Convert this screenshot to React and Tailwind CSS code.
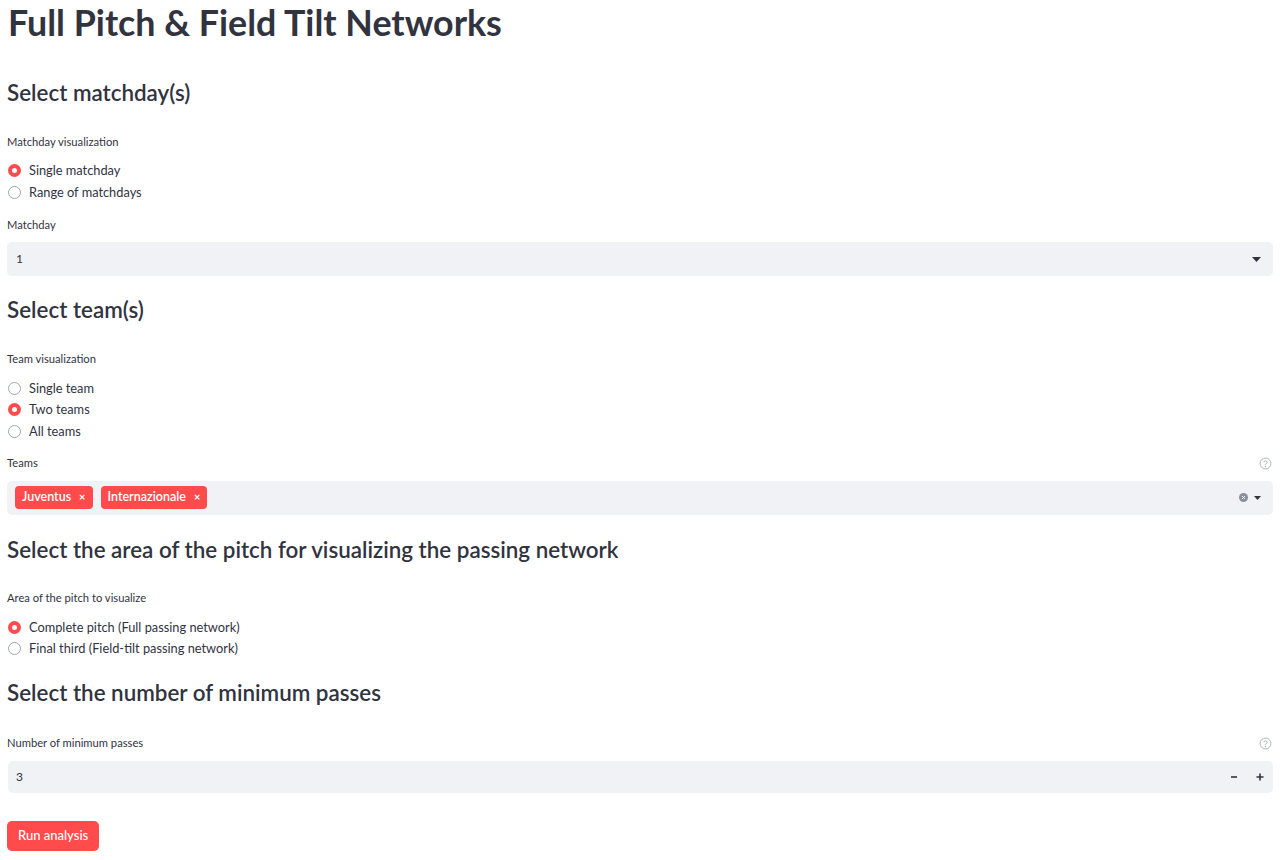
import React from "react";

const FONT = { fontFamily: "Lato, 'Open Sans', sans-serif" };

function Heading({ children, className = "" }) {
  return (
    <h3 className={`h-[30px] leading-[30px] text-[22.4px] font-semibold text-[#31333f] ${className}`}>
      {children}
    </h3>
  );
}

function Label({ children, help, className = "" }) {
  return (
    <div className={`flex items-center justify-between h-[16px] text-[11.2px] text-[#31333f] ${className}`}>
      <span>{children}</span>
      {help && (
        <svg width="13" height="13" viewBox="0 0 24 24" className="mr-[1px] text-[#a3a8b4]" fill="none" stroke="currentColor" strokeWidth="1.6">
          <circle cx="12" cy="12" r="10" />
          <path d="M9.1 9a3 3 0 0 1 5.8 1c0 2-3 2.6-3 4.3" strokeLinecap="round" />
          <circle cx="12" cy="17.6" r="0.6" fill="currentColor" />
        </svg>
      )}
    </div>
  );
}

function Radio({ label, checked }) {
  return (
    <div className="flex items-center h-[21.5px] pl-[1px]">
      {checked ? (
        <span className="w-[13px] h-[13px] rounded-full bg-[#ff4b4b] flex items-center justify-center">
          <span className="w-[5px] h-[5px] rounded-full bg-white" />
        </span>
      ) : (
        <span className="w-[13px] h-[13px] rounded-full border-[1.5px] border-[#a3a8b4] bg-white" />
      )}
      <span className="ml-[8px] text-[12.8px] text-[#31333f]">{label}</span>
    </div>
  );
}

function Caret() {
  return (
    <svg width="9" height="5" viewBox="0 0 9 5">
      <path d="M0 0h9L4.5 5z" fill="#31333f" />
    </svg>
  );
}

function Tag({ children }) {
  return (
    <span className="flex items-center h-[23px] px-[7px] rounded-[4px] bg-[#ff4b4b] text-white text-[12.5px] font-semibold">
      {children}
      <span className="ml-[8px] text-[11px] font-bold">×</span>
    </span>
  );
}

export default function App() {
  return (
    <div className="bg-white min-h-[860px] px-[7px]" style={FONT}>
      <h1 className="h-[46px] leading-[46px] text-[35.8px] font-bold text-[#31333f] pl-[1px]">
        Full Pitch &amp; Field Tilt Networks
      </h1>

      <Heading className="mt-[32px]">Select matchday(s)</Heading>
      <Label className="mt-[26px]">Matchday visualization</Label>
      <div className="mt-[10px]">
        <Radio label="Single matchday" checked />
        <Radio label="Range of matchdays" />
      </div>
      <Label className="mt-[14px]">Matchday</Label>
      <div className="mt-[9px] h-[34px] rounded-[5px] bg-[#f0f2f6] flex items-center justify-between pl-[9px] pr-[12px]">
        <span className="text-[12px] text-[#31333f]">1</span>
        <Caret />
      </div>

      <Heading className="mt-[19px]">Select team(s)</Heading>
      <Label className="mt-[26px]">Team visualization</Label>
      <div className="mt-[10.5px]">
        <Radio label="Single team" />
        <Radio label="Two teams" checked />
        <Radio label="All teams" />
      </div>
      <Label className="mt-[13.5px]" help>Teams</Label>
      <div className="mt-[9px] h-[34px] rounded-[5px] bg-[#f0f2f6] flex items-center justify-between pl-[8px] pr-[12px]">
        <div className="flex gap-[8px]">
          <Tag>Juventus</Tag>
          <Tag>Internazionale</Tag>
        </div>
        <div className="flex items-center gap-[6px]">
          <svg width="9" height="9" viewBox="0 0 10 10">
            <circle cx="5" cy="5" r="5" fill="#8b8f9c" />
            <path d="M3.3 3.3l3.4 3.4M6.7 3.3l-3.4 3.4" stroke="#f0f2f6" strokeWidth="1.1" />
          </svg>
          <svg width="7" height="4" viewBox="0 0 9 5">
            <path d="M0 0h9L4.5 5z" fill="#31333f" />
          </svg>
        </div>
      </div>

      <Heading className="mt-[20px]">Select the area of the pitch for visualizing the passing network</Heading>
      <Label className="mt-[26px]">Area of the pitch to visualize</Label>
      <div className="mt-[10px]">
        <Radio label="Complete pitch (Full passing network)" checked />
        <Radio label="Final third (Field-tilt passing network)" />
      </div>

      <Heading className="mt-[18.5px]">Select the number of minimum passes</Heading>
      <Label className="mt-[27px]" help>Number of minimum passes</Label>
      <div className="mt-[10px] h-[32px] rounded-[5px] bg-[#f0f2f6] flex items-center justify-between pl-[8px] ml-[1px]">
        <span className="text-[12px] text-[#31333f]">3</span>
        <div className="flex items-center h-full">
          <span className="w-[26px] h-full flex items-center justify-center">
            <svg width="8" height="8" viewBox="0 0 8 8"><path d="M1 4h6" stroke="#31333f" strokeWidth="1.6" /></svg>
          </span>
          <span className="w-[26px] h-full flex items-center justify-center">
            <svg width="8" height="8" viewBox="0 0 8 8"><path d="M0.5 4h7M4 0.5v7" stroke="#31333f" strokeWidth="1.6" /></svg>
          </span>
        </div>
      </div>

      <button className="mt-[28px] h-[30px] px-[11px] rounded-[5px] bg-[#ff4b4b] text-white text-[13px] font-medium">
        Run analysis
      </button>
    </div>
  );
}
